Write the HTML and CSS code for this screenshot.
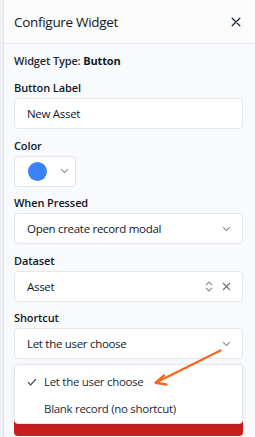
FILE: index.html
```html
<!DOCTYPE html>
<html lang="en">
<head>
<meta charset="utf-8">
<title>Configure Widget</title>
<link rel="stylesheet" href="styles.css">
</head>
<body>
<div class="panel">
  <header class="header">
    <h1 class="title">Configure Widget</h1>
    <button class="close" aria-label="Close">
      <svg width="10" height="10" viewBox="0 0 10 10"><path d="M1.2 1.2L8.8 8.8M8.8 1.2L1.2 8.8" stroke="#1f2937" stroke-width="1.3" stroke-linecap="round"/></svg>
    </button>
  </header>
  <div class="content">
    <div class="type"><span class="type-key">Widget Type:</span> <b>Button</b></div>

    <div class="field">
      <label class="label">Button Label</label>
      <div class="control">New Asset</div>
    </div>

    <div class="field">
      <label class="label">Color</label>
      <div class="color-btn">
        <span class="swatch"></span>
        <svg class="chev" width="9" height="6" viewBox="0 0 9 6"><path d="M1 1.2L4.5 4.5L8 1.2" fill="none" stroke="#8a8f98" stroke-width="1.1"/></svg>
      </div>
    </div>

    <div class="field">
      <label class="label">When Pressed</label>
      <div class="control select">
        <span>Open create record modal</span>
        <svg class="chev" width="9" height="6" viewBox="0 0 9 6"><path d="M1 1.2L4.5 4.5L8 1.2" fill="none" stroke="#8a8f98" stroke-width="1.1"/></svg>
      </div>
    </div>

    <div class="field">
      <label class="label">Dataset</label>
      <div class="control select">
        <span>Asset</span>
        <span class="icons">
          <svg width="8" height="11" viewBox="0 0 8 11"><path d="M1 4L4 1L7 4M1 7L4 10L7 7" fill="none" stroke="#8a8f98" stroke-width="1.1"/></svg>
          <svg width="9" height="9" viewBox="0 0 9 9"><path d="M1 1L8 8M8 1L1 8" fill="none" stroke="#6b7280" stroke-width="1.2"/></svg>
        </span>
      </div>
    </div>

    <div class="field shortcut">
      <label class="label">Shortcut</label>
      <div class="control select">
        <span>Let the user choose</span>
        <svg class="chev" width="9" height="6" viewBox="0 0 9 6"><path d="M1 1.2L4.5 4.5L8 1.2" fill="none" stroke="#8a8f98" stroke-width="1.1"/></svg>
      </div>
      <ul class="menu">
        <li class="item selected">
          <svg class="check" width="10" height="8" viewBox="0 0 10 8"><path d="M1 4.2L3.6 6.8L9 1.2" fill="none" stroke="#374151" stroke-width="1.2"/></svg>
          <span>Let the user choose</span>
        </li>
        <li class="item"><span>Blank record (no shortcut)</span></li>
      </ul>
    </div>

    <button class="danger" aria-label="Delete widget"></button>
  </div>
  <svg class="annot" width="255" height="437" viewBox="0 0 255 437">
    <path d="M220.5 350.5L156 382.5" stroke="#f26b21" stroke-width="2.4" stroke-linecap="round" fill="none"/>
    <path d="M164 375.5L155.5 382.8L166.5 384.5" stroke="#f26b21" stroke-width="2.4" stroke-linecap="round" stroke-linejoin="round" fill="none"/>
  </svg>
</div>
</body>
</html>
```
FILE: styles.css
```css
* { box-sizing: border-box; }
html, body { margin: 0; padding: 0; }
body {
  background: #eef0f4;
  font-family: "Open Sans", "Noto Sans", sans-serif;
  color: #111827;
  width: 255px;
  height: 437px;
  overflow: hidden;
}
.panel {
  position: relative;
  margin-left: 3px;
  border-left: 1px solid #e3e6ee;
  background: #f9fafb;
  height: 437px;
}
.header {
  height: 44px;
  display: flex;
  align-items: center;
  justify-content: space-between;
  padding: 0 14px 0 10px;
  background: #fbfbfc;
  border-bottom: 1px solid #e4e7ee;
}
.title {
  margin: 0;
  font-size: 13.5px;
  font-weight: 400;
  color: #111827;
  letter-spacing: -0.3px;
}
.close {
  border: 0;
  background: none;
  padding: 0;
  width: 10px;
  height: 10px;
  display: flex;
}
.content {
  padding: 9px 12px 0 10px;
  display: flex;
  flex-direction: column;
}
.type {
  font-size: 11px;
  line-height: 16px;
  font-weight: 600;
  color: #1f2937;
  letter-spacing: -0.15px;
  margin-bottom: 11px;
}
.type b { font-weight: 700; color: #111827; }
.field {
  display: flex;
  flex-direction: column;
  margin-bottom: 8.5px;
}
.label {
  font-size: 11px;
  line-height: 16px;
  font-weight: 600;
  color: #111827;
  letter-spacing: -0.1px;
  margin-bottom: 2px;
}
.control {
  height: 31px;
  background: #fff;
  border: 1px solid #e5e7ef;
  border-radius: 4px;
  display: flex;
  align-items: center;
  padding: 0 12px;
  font-size: 11.5px;
  letter-spacing: -0.3px;
  color: #111827;
}
.select { justify-content: space-between; padding-right: 11px; }
.icons { display: flex; align-items: center; gap: 9px; }
.color-btn {
  width: 62px;
  height: 31px;
  background: #fff;
  border: 1px solid #e5e7ef;
  border-radius: 4px;
  display: flex;
  align-items: center;
  padding-left: 13px;
  gap: 13px;
}
.swatch {
  width: 19px;
  height: 19px;
  border-radius: 50%;
  background: #3b82f6;
}
.shortcut { position: relative; z-index: 2; }
.menu {
  position: absolute;
  left: 0;
  right: 0;
  top: 54px;
  margin: 0;
  padding: 3px 0 1px;
  list-style: none;
  background: #fff;
  border: 1px solid #e5e7ef;
  border-radius: 4px;
  box-shadow: 0 2px 6px rgba(17, 24, 39, 0.08);
}
.item {
  height: 27px;
  display: flex;
  align-items: center;
  padding-left: 29px;
  position: relative;
  font-size: 11.5px;
  letter-spacing: -0.3px;
  color: #1f2937;
}
.check { position: absolute; left: 12px; top: 10px; }
.danger {
  display: block;
  margin-top: 37px;
  height: 31px;
  width: 100%;
  border: 0;
  border-radius: 4px;
  background: #c81e1e;
}
.annot {
  position: absolute;
  left: -4px;
  top: 0;
  z-index: 5;
  pointer-events: none;
}
```
